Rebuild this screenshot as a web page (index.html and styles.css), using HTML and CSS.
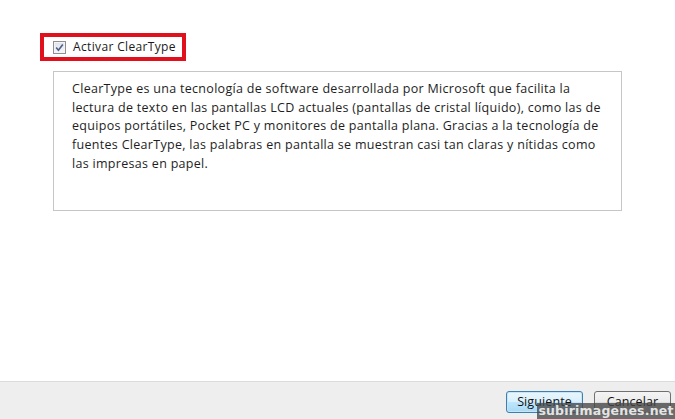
FILE: index.html
```html
<!DOCTYPE html>
<html lang="es">
<head>
<meta charset="utf-8">
<link rel="stylesheet" href="styles.css">
</head>
<body>
<div class="page">
  <main class="content">
    <div class="highlight">
      <label class="check">
        <span class="box">
          <svg width="9" height="9" viewBox="0 0 9 9"><path d="M1.2 4.6 L3.4 7.2 L7.8 1.4" fill="none" stroke="#4a5f8c" stroke-width="1.6"/></svg>
        </span>
        <span class="label">Activar ClearType</span>
      </label>
    </div>
    <div class="desc">
      <p>ClearType es una tecnología de software desarrollada por Microsoft que facilita la lectura de texto en las pantallas LCD actuales (pantallas de cristal líquido), como las de equipos portátiles, Pocket PC y monitores de pantalla plana. Gracias a la tecnología de fuentes ClearType, las palabras en pantalla se muestran casi tan claras y nítidas como las impresas en papel.</p>
    </div>
  </main>
  <footer class="footer">
    <button class="btn primary">Siguiente</button>
    <button class="btn">Cancelar</button>
  </footer>
  <div class="watermark">subirimagenes.net</div>
</div>
</body>
</html>
```
FILE: styles.css
```css
* { box-sizing: border-box; }
html, body { margin: 0; padding: 0; }
body {
  width: 675px;
  height: 419px;
  overflow: hidden;
  background: #fff;
  font-family: "Open Sans", "Noto Sans", sans-serif;
  font-size: 12px;
  color: #1e1e1e;
}
.page {
  position: relative;
  height: 419px;
  display: flex;
  flex-direction: column;
}
.content {
  flex: 1;
  padding: 33px 0 0 40px;
}
.highlight {
  width: 146px;
  height: 28px;
  border: 4px solid #e0111d;
  display: flex;
  align-items: center;
  padding-left: 9px;
}
.check {
  display: flex;
  align-items: center;
  gap: 7px;
}
.box {
  width: 13px;
  height: 13px;
  border: 1px solid #8f8f8f;
  background: linear-gradient(#dfe3ea, #f6f7f9);
  display: flex;
  align-items: center;
  justify-content: center;
  box-shadow: inset 0 0 0 1px #f4f4f4;
}
.label {
  font-size: 12px;
  line-height: 16px;
  color: #1a1a1a;
  letter-spacing: 0.35px;
}
.desc {
  margin: 10px 0 0 13px;
  width: 569px;
  height: 140px;
  border: 1px solid #c6c6c6;
  padding: 8px 14px 0 18px;
}
.desc p {
  margin: 0;
  font-size: 12.5px;
  line-height: 18.7px;
  letter-spacing: 0.3px;
}
.footer {
  height: 38px;
  background: #eeeeee;
  border-top: 1px solid #dcdcdc;
  display: flex;
  justify-content: flex-end;
  align-items: flex-start;
  gap: 11px;
  padding: 9px 4px 0 0;
}
.btn {
  width: 77px;
  height: 22px;
  font-family: inherit;
  font-size: 12.5px;
  color: #111;
  border: 1px solid #707070;
  border-radius: 3px;
  background: linear-gradient(#f4f4f4 0%, #ebebeb 50%, #dcdcdc 51%, #cfcfcf 100%);
  padding: 0;
  line-height: 18px;
  letter-spacing: 0.1px;
}
.btn.primary {
  border-color: #3c7fb1;
  background: linear-gradient(#eaf6fd 0%, #d9f0fc 50%, #bee6fd 51%, #a7d9f5 100%);
  box-shadow: inset 0 0 0 1px #c6e6f8;
}
.watermark {
  position: absolute;
  right: 0;
  bottom: 0;
  width: 138px;
  height: 16px;
  background: rgba(70, 70, 70, 0.78);
  color: #e4e4e4;
  font-family: "DejaVu Sans", sans-serif;
  font-weight: bold;
  font-size: 12.5px;
  line-height: 16px;
  letter-spacing: 0.2px;
  text-align: center;
  white-space: nowrap;
  overflow: hidden;
}
```
